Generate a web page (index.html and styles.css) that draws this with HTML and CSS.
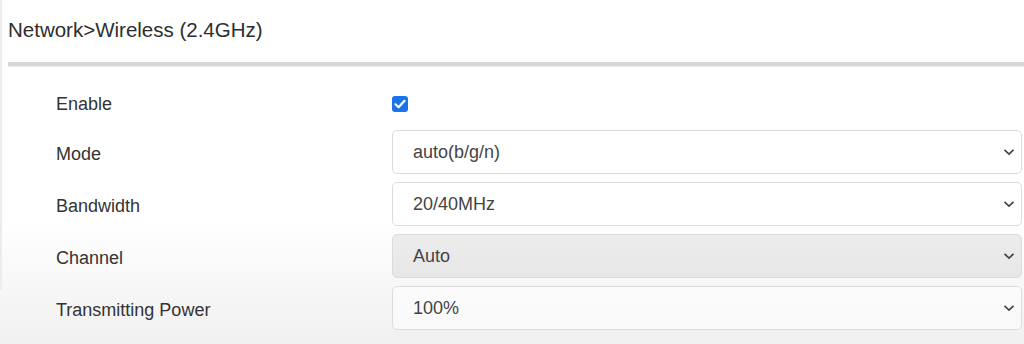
FILE: index.html
```html
<!DOCTYPE html>
<html lang="en">

<head>
    <meta charset="UTF-8">
    <title>Network Wireless 2.4GHz</title>
    <link rel="stylesheet" href="styles.css">
</head>

<body>
    <div class="panel">
        <h2 class="title">Network&gt;Wireless (2.4GHz)</h2>
        <div class="divider"></div>

        <div class="form">
            <div class="row row-check">
                <label class="label">Enable</label>
                <div class="field">
                    <span class="checkbox">
                        <svg width="16" height="16" viewBox="0 0 16 16">
                            <polyline points="3.5,8.3 6.6,11.2 12.5,4.8" fill="none" stroke="#fff" stroke-width="2.2" stroke-linecap="round" stroke-linejoin="round"/>
                        </svg>
                    </span>
                </div>
            </div>

            <div class="row">
                <label class="label">Mode</label>
                <div class="select">
                    <span>auto(b/g/n)</span>
                    <svg class="chevron" width="12" height="8" viewBox="0 0 12 8"><polyline points="1.5,1.8 6,6 10.5,1.8" fill="none" stroke="#444" stroke-width="1.7"/></svg>
                </div>
            </div>

            <div class="row">
                <label class="label">Bandwidth</label>
                <div class="select">
                    <span>20/40MHz</span>
                    <svg class="chevron" width="12" height="8" viewBox="0 0 12 8"><polyline points="1.5,1.8 6,6 10.5,1.8" fill="none" stroke="#444" stroke-width="1.7"/></svg>
                </div>
            </div>

            <div class="row">
                <label class="label">Channel</label>
                <div class="select disabled">
                    <span>Auto</span>
                    <svg class="chevron" width="12" height="8" viewBox="0 0 12 8"><polyline points="1.5,1.8 6,6 10.5,1.8" fill="none" stroke="#444" stroke-width="1.7"/></svg>
                </div>
            </div>

            <div class="row">
                <label class="label">Transmitting Power</label>
                <div class="select">
                    <span>100%</span>
                    <svg class="chevron" width="12" height="8" viewBox="0 0 12 8"><polyline points="1.5,1.8 6,6 10.5,1.8" fill="none" stroke="#444" stroke-width="1.7"/></svg>
                </div>
            </div>
        </div>
    </div>
</body>

</html>
```

FILE: styles.css
```css
/* Reset */
html,
body,
h2 {
    margin: 0;
    padding: 0;
}

body {
    font-family: "Liberation Sans", Arial, sans-serif;
    color: #333;
    height: 344px;
    overflow: hidden;
    background: linear-gradient(to bottom, #fff 0, #fff 220px, #f0f0f0 344px);
}

/* Page panel */
.panel {
    border-left: 2px solid #ececec;
    height: 290px;
}

.title {
    font-size: 20.5px;
    font-weight: normal;
    line-height: 24px;
    padding: 18px 0 0 6px;
    color: #2e2e2e;
}

.divider {
    margin: 20px 0 0 6px;
    height: 4px;
    background: #d6d6d6;
    border-bottom: 1px solid #ececec;
}

/* Form rows */
.form {
    padding: 19px 2px 0 54px;
    display: flex;
    flex-direction: column;
    gap: 8px;
}

.row {
    display: grid;
    grid-template-columns: 336px 1fr;
    align-items: center;
    height: 44px;
}

.row-check {
    height: 36px;
}

.label {
    font-size: 18px;
    color: #333;
    padding-top: 5px;
}

.row-check .label {
    padding-top: 0;
}

.checkbox {
    display: block;
    width: 16px;
    height: 16px;
    border-radius: 3px;
    background: #1a73e8;
}

.checkbox svg {
    display: block;
}

/* Select boxes */
.select {
    height: 44px;
    box-sizing: border-box;
    border: 1px solid #dcdcdc;
    border-radius: 5px;
    background: rgba(255, 255, 255, 0.5);
    display: flex;
    align-items: center;
    justify-content: space-between;
    padding: 0 6px 0 20px;
    font-size: 18px;
    color: #444;
}

.select.disabled {
    background: rgba(0, 0, 0, 0.065);
}

.chevron {
    display: block;
}
```
